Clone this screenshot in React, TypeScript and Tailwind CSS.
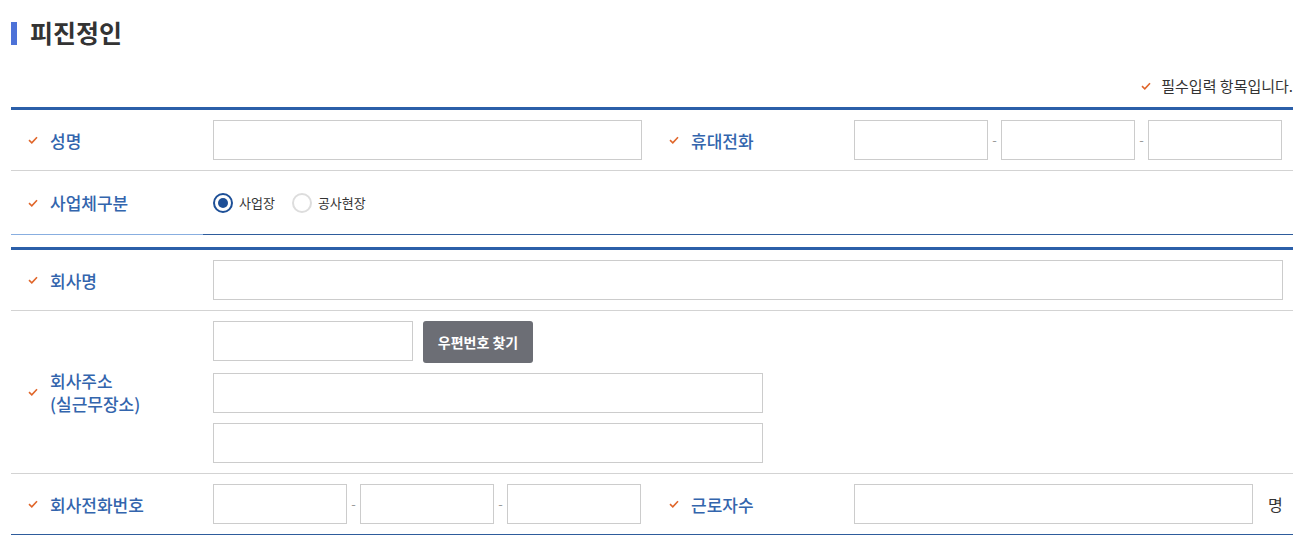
import React from "react";

const font = { fontFamily: '"Noto Sans CJK KR", "Noto Sans", sans-serif' };

const Check = () => (
    <svg width="10" height="8" viewBox="0 0 10 8" className="shrink-0">
        <path d="M1 4.2 L3.8 6.8 L9 1.2" fill="none" stroke="#e0662a" strokeWidth="1.6" />
    </svg>
);

const Label = ({ children }: { children: React.ReactNode }) => (
    <div className="w-[192px] shrink-0 flex items-center pl-[17px] gap-3 text-[17px] font-medium text-[#3365ad] leading-[23px]">
        <Check />
        <div>{children}</div>
    </div>
);

const Field = ({ w }: { w: string }) => (
    <input type="text" className={`${w} h-[40px] border border-[#cccccc] bg-white outline-none`} />
);

const Dash = () => <span className="w-[13px] text-center text-[#999999] text-[13px]">-</span>;

const Radio = ({ checked, label }: { checked?: boolean; label: string }) => (
    <label className="flex items-center gap-[6px] text-[13px] text-[#333333]">
        {checked ? (
            <span className="w-[20px] h-[20px] rounded-full border-2 border-[#1d4f97] flex items-center justify-center">
                <span className="w-[10px] h-[10px] rounded-full bg-[#1d4f97]" />
            </span>
        ) : (
            <span className="w-[20px] h-[20px] rounded-full border-2 border-[#dddddd]" />
        )}
        {label}
    </label>
);

export default function App() {
    return (
        <div className="bg-white w-[1313px] h-[550px] pl-[11px] pr-[20px] pt-[16px]" style={font}>
            <div className="flex items-center gap-[13px] h-[34px]">
                <span className="w-[6px] h-[23px] bg-[#4d72d8]" />
                <h2 className="text-[25px] font-bold text-[#333333]">피진정인</h2>
            </div>

            <div className="flex justify-end items-center gap-[10px] mt-[26px] text-[15px] text-[#333333] h-[20px]">
                <Check />
                <span>필수입력 항목입니다.</span>
            </div>

            {/* 개인정보 */}
            <div className="mt-[11px] border-t-[3px] border-[#2b5fa9]">
                <div className="flex border-b border-[#d3d3d3] py-[10px]">
                    <Label>성명</Label>
                    <div className="w-[449px] pl-[10px]">
                        <Field w="w-[429px]" />
                    </div>
                    <Label>휴대전화</Label>
                    <div className="flex items-center pl-[10px]">
                        <Field w="w-[134px]" />
                        <Dash />
                        <Field w="w-[134px]" />
                        <Dash />
                        <Field w="w-[134px]" />
                    </div>
                </div>
                <div className="flex h-[63px]">
                    <Label>사업체구분</Label>
                    <div className="flex items-center gap-[17px] pl-[10px]">
                        <Radio checked label="사업장" />
                        <Radio label="공사현장" />
                    </div>
                </div>
                <div className="flex h-px">
                    <div className="w-[192px] bg-[#88aee0]" />
                    <div className="flex-1 bg-[#2e5c9c]" />
                </div>
            </div>

            {/* 회사정보 */}
            <div className="mt-[12px] border-t-[3px] border-[#2b5fa9] border-b border-b-[#2e5c9c]">
                <div className="flex border-b border-[#d3d3d3] py-[10px]">
                    <Label>회사명</Label>
                    <div className="pl-[10px]">
                        <Field w="w-[1070px]" />
                    </div>
                </div>
                <div className="flex border-b border-[#d3d3d3] py-[10px]">
                    <Label>
                        회사주소
                        <br />
                        (실근무장소)
                    </Label>
                    <div className="pl-[10px] flex flex-col gap-[10px]">
                        <div className="flex items-start gap-[10px]">
                            <Field w="w-[200px]" />
                            <button className="h-[42px] w-[110px] rounded-[3px] bg-[#6c6e75] text-white text-[14px] font-bold">
                                우편번호 찾기
                            </button>
                        </div>
                        <Field w="w-[550px]" />
                        <Field w="w-[550px]" />
                    </div>
                </div>
                <div className="flex py-[10px]">
                    <Label>회사전화번호</Label>
                    <div className="w-[449px] flex items-center pl-[10px]">
                        <Field w="w-[134px]" />
                        <Dash />
                        <Field w="w-[134px]" />
                        <Dash />
                        <Field w="w-[134px]" />
                    </div>
                    <Label>근로자수</Label>
                    <div className="flex items-center pl-[10px] gap-[15px] text-[16px] text-[#333333]">
                        <Field w="w-[399px]" />
                        <span>명</span>
                    </div>
                </div>
            </div>
        </div>
    );
}
